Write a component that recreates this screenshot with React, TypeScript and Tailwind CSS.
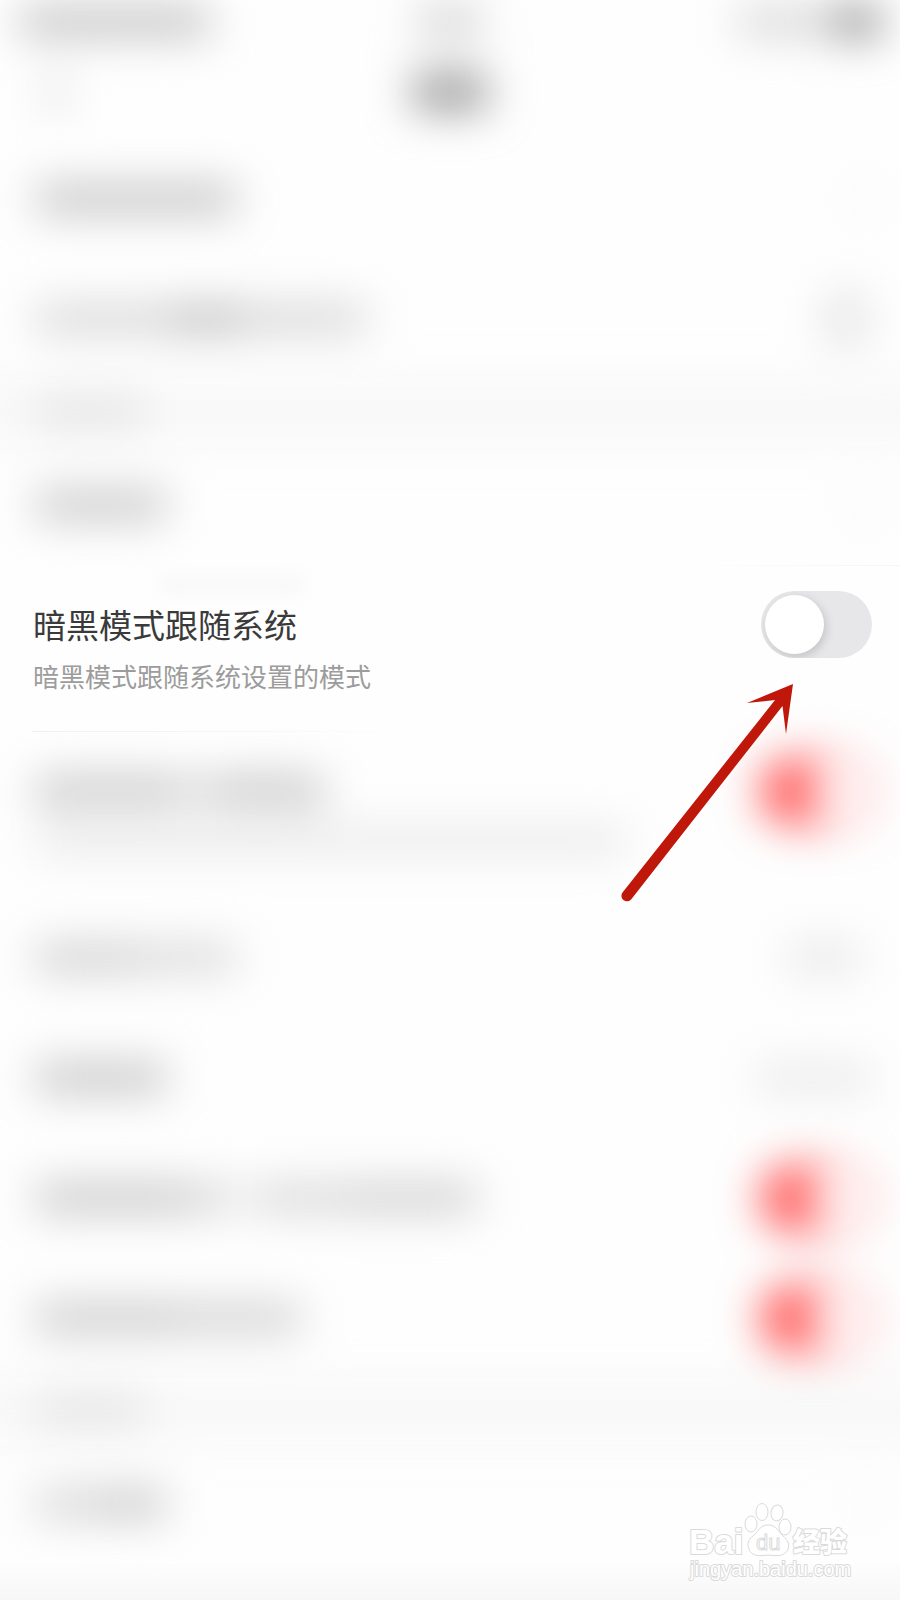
import { clsx } from "clsx";

type RowProps = {
  bars: string[];
  value?: string;
  toggle?: boolean;
};

const topRows: RowProps[] = [
  { bars: ["w-[200px] bg-[#c0c0c0]"], value: "w-3 bg-[#eee]" },
  {
    bars: ["w-[135px] bg-[#d5d5d5]", "w-[70px] bg-[#bebebe]", "w-[125px] bg-[#d5d5d5]"],
    value: "mr-1 h-[60px] w-11 rounded-full bg-[#e6e6e6]",
  },
];

const bottomRows: RowProps[] = [
  { bars: ["w-[100px] bg-[#cdcdcd]", "w-[100px] bg-[#d8d8d8]"], value: "mr-3 w-[72px] bg-[#e6e6e6]" },
  { bars: ["w-[130px] bg-[#c1c1c1]"], value: "w-[116px] bg-[#e9e9e9]" },
  {
    bars: ["w-[150px] bg-[#c4c4c4]", "mr-5 w-[46px] bg-[#d4d4d4]", "w-[100px] bg-[#d6d6d6]", "w-[124px] bg-[#cdcdcd]"],
    toggle: true,
  },
  { bars: ["w-[140px] bg-[#c6c6c6]", "w-[125px] bg-[#cecece]"], toggle: true },
];

function Switch({ id, on = false }: { id?: string; on?: boolean }) {
  return (
    <input
      id={id}
      type="checkbox"
      role="switch"
      aria-label={id ? undefined : "开关"}
      defaultChecked={on}
      className={clsx(
        "relative h-[67px] w-[111px] shrink-0 appearance-none overflow-hidden rounded-full bg-[#e7e7e9]",
        "before:absolute before:top-1 before:left-1 before:size-[59px] before:rounded-full before:bg-white before:shadow-[2px_3px_10px_rgba(0,0,0,0.16)]",
        "checked:bg-[#ff5050] checked:before:left-12 checked:before:shadow-none",
      )}
    />
  );
}

function Bars({ bars }: { bars: string[] }) {
  return (
    <div className="flex">
      {bars.map((bar, i) => (
        <span key={i} className={clsx("h-7", bar)} />
      ))}
    </div>
  );
}

function Row({ bars, value, toggle }: RowProps) {
  return (
    <div className="flex h-[120px] items-center justify-between pr-7 pl-9">
      <Bars bars={bars} />
      {value && <span className={clsx("h-7", value)} />}
      {toggle && <Switch on />}
    </div>
  );
}

function SectionBand() {
  return (
    <div className="-mx-12 flex h-[66px] items-center bg-[#f8f8f8] pl-[84px]">
      <span className="h-6 w-[108px] bg-[#dedede]" />
    </div>
  );
}

function Arrow() {
  return (
    <svg
      className="pointer-events-none absolute top-[118px] right-[106px] z-10"
      width="178"
      height="220"
      viewBox="0 0 178 220"
      aria-hidden="true"
    >
      <path
        d="M177 1 L131 20 L159 17 L6.500 209.500 A5.300 5.300 0 0 0 15.500 216 L166.500 23 L170 51 Z"
        fill="#bf180b"
      />
    </svg>
  );
}

function Watermark() {
  return (
    <svg
      className="pointer-events-none absolute right-11 bottom-3 z-10"
      width="168"
      height="88"
      viewBox="0 0 168 88"
      fill="#fff"
      stroke="#dadada"
      strokeWidth="2"
      strokeLinejoin="round"
      aria-label="Baidu 经验"
    >
      <g style={{ paintOrder: "stroke" }} fontFamily="'Liberation Sans', sans-serif" fontWeight="700">
        <text x="1" y="54" fontSize="35">Bai</text>
        <text x="105" y="52" fontSize="27" fontFamily="'Noto Sans CJK SC', sans-serif" fontWeight="900">经验</text>
        <text x="2" y="76" fontSize="20" fontWeight="400">jingyan.baidu.com</text>
      </g>
      <g strokeWidth="1">
        <ellipse cx="63" cy="24" rx="6" ry="8" />
        <ellipse cx="74" cy="12" rx="6" ry="8.500" />
        <ellipse cx="89" cy="13" rx="6" ry="8" transform="rotate(8 89 13)" />
        <ellipse cx="97" cy="27" rx="6" ry="8" />
        <path d="M80 25 C72 25 70 32 65 36 C60 40 59 44 61 49 C64 57 72 56 80 55 C88 56 97 57 100 49 C102 43 99 40 95 36 C90 31 88 25 80 25 Z" />
      </g>
      <text x="68" y="50" fontSize="22" fontFamily="'Liberation Sans', sans-serif" strokeWidth="1">du</text>
    </svg>
  );
}

export default function App() {
  return (
    <main className="relative overflow-hidden bg-[#fefefe] font-['Noto_Sans_CJK_SC',sans-serif]">
      <section className="-mx-12 px-12 blur-[22px]">
        <div className="grid h-11 grid-cols-3 items-center px-5">
          <span className="h-7 w-[190px] bg-[#bebebe]" />
          <span className="h-7 w-16 justify-self-center bg-[#cfcfcf]" />
          <div className="flex items-center justify-self-end">
            <span className="h-7 w-[98px] bg-[#d6d6d6]" />
            <span className="h-7 w-11 bg-[#808080]" />
          </div>
        </div>
        <div className="grid h-[95px] grid-cols-3 items-center px-12">
          <span className="h-9 w-4 bg-[#d4d4d4]" />
          <span className="h-9 w-[74px] justify-self-center bg-[#959595]" />
        </div>
        {topRows.map((row, i) => (
          <Row key={i} {...row} />
        ))}
        <SectionBand />
        <Row bars={["w-[130px] bg-[#c4c4c4]"]} value="w-3 bg-[#eee]" />
      </section>

      <section className="relative h-[167px]">
        <div className="absolute top-0 right-0 h-px w-1/4 bg-linear-to-r from-transparent to-[#f5f5f5]" />
        <div className="absolute top-4 left-40 h-2 w-36 bg-[#f0f0f0] blur-[10px]" />
        <div className="flex justify-between pt-[26px] pr-7 pl-[33px]">
          <div className="pt-1.5">
            <label htmlFor="follow-system" className="block text-[33px] leading-[54px] text-[#3a3a3a]">
              暗黑模式跟随系统
            </label>
            <p className="text-[26px] leading-[50px] text-[#9c9c9c]">暗黑模式跟随系统设置的模式</p>
          </div>
          <Switch id="follow-system" />
        </div>
        <div className="absolute bottom-0 left-8 h-px w-96 bg-linear-to-r from-[#f0f0f2] to-transparent" />
        <Arrow />
      </section>

      <section className="-mx-12 px-12 blur-[22px]">
        <div className="flex h-[166px] justify-between pt-[26px] pr-7 pl-9">
          <div className="pt-[19px]">
            <Bars bars={["w-[140px] bg-[#c3c3c3]", "w-[40px] bg-[#d8d8d8]", "w-[108px] bg-[#c2c2c2]"]} />
            <div className="mt-6 h-6 w-[590px] bg-[#e6e6e6]" />
          </div>
          <Switch on />
        </div>
        {bottomRows.map((row, i) => (
          <Row key={i} {...row} />
        ))}
        <SectionBand />
        <Row bars={["w-[60px] bg-[#d4d4d4]", "w-[70px] bg-[#c6c6c6]"]} value="w-3 bg-[#f4f4f4]" />
      </section>
      <div className="h-9 bg-linear-to-b from-[#fdfdfd] to-[#f7f7f7]" />
      <Watermark />
    </main>
  );
}
